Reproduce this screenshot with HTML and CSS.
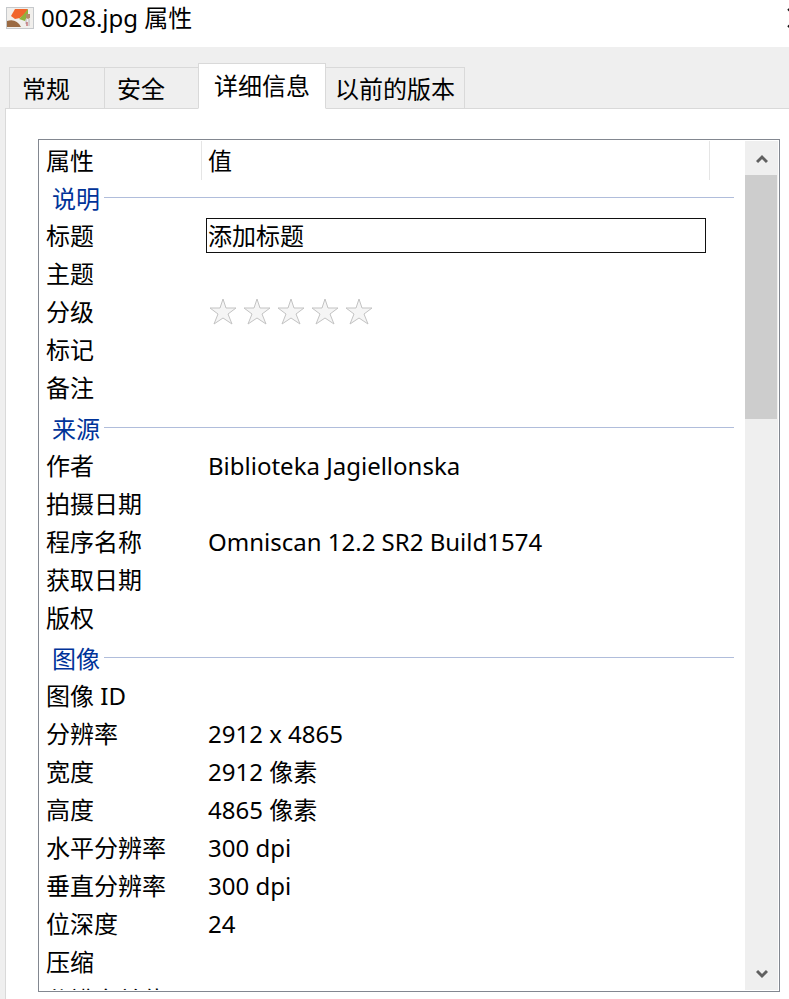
FILE: index.html
```html
<!DOCTYPE html>
<html lang="zh-CN">
<head>
    <meta charset="UTF-8">
    <meta name="viewport" content="width=device-width, initial-scale=1.0">
    <title>0028.jpg 属性</title>
    <link rel="stylesheet" href="styles.css">
</head>
<body>
    <header class="titlebar">
        <svg class="file-icon" viewBox="0 0 28 22" aria-hidden="true">
            <rect x="0.5" y="0.5" width="27" height="21" fill="#f1efec" stroke="#c6c9cc"/>
            <path d="M9 2h13l-3 5-5 4-5 1-4-3z" fill="#f1652b"/>
            <path d="M22 2v6l-3 6-6-2 5-5z" fill="#8fb23c"/>
            <path d="M1 14c6-2 11 0 14 6H1z" fill="#9a6a43"/>
            <path d="M20 7h4v4l-2 1-2-1z" fill="#b28a69"/>
            <path d="M20 12v5M23 12v7" stroke="#b9b4b8" fill="none"/>
            <path d="M21 15v4" stroke="#b23b42" fill="none"/>
        </svg>
        <h1 class="title">0028.jpg 属性</h1>
        <button class="close" type="button" aria-label="关闭">
            <svg viewBox="0 0 20 20" width="20" height="20"><path d="M1 1l18 18M19 1L1 19" stroke="#111" stroke-width="2" fill="none"/></svg>
        </button>
    </header>

    <main class="content">
        <div class="tabs" role="tablist">
            <button class="tab" type="button" role="tab">常规</button>
            <button class="tab" type="button" role="tab">安全</button>
            <button class="tab active" type="button" role="tab" aria-selected="true">详细信息</button>
            <button class="tab last" type="button" role="tab">以前的版本</button>
        </div>

        <section class="panel">
            <div class="list">
                <div class="view">
                    <table class="props">
                        <colgroup>
                            <col class="col-name">
                            <col>
                            <col class="col-end">
                        </colgroup>
                        <thead>
                            <tr><th>属性</th><th class="head-value">值</th><th class="head-value"></th></tr>
                        </thead>
                        <tbody>
                            <tr class="group"><th colspan="3"><span class="legend">说明</span></th></tr>
                            <tr>
                                <td><label for="titulo">标题</label></td>
                                <td class="edit"><input class="field" id="titulo" type="text" value="添加标题"></td>
                                <td></td>
                            </tr>
                            <tr><td>主题</td><td></td><td></td></tr>
                            <tr>
                                <td>分级</td>
                                <td>
                                    <div class="stars">
                                        <button class="star" type="button" aria-label="1 星"><svg viewBox="0 0 28 28"><path d="M14 1l3 9h10l-8 6 4 10-9-6-9 6 4-10-8-6h10z"/></svg></button>
                                        <button class="star" type="button" aria-label="2 星"><svg viewBox="0 0 28 28"><path d="M14 1l3 9h10l-8 6 4 10-9-6-9 6 4-10-8-6h10z"/></svg></button>
                                        <button class="star" type="button" aria-label="3 星"><svg viewBox="0 0 28 28"><path d="M14 1l3 9h10l-8 6 4 10-9-6-9 6 4-10-8-6h10z"/></svg></button>
                                        <button class="star" type="button" aria-label="4 星"><svg viewBox="0 0 28 28"><path d="M14 1l3 9h10l-8 6 4 10-9-6-9 6 4-10-8-6h10z"/></svg></button>
                                        <button class="star" type="button" aria-label="5 星"><svg viewBox="0 0 28 28"><path d="M14 1l3 9h10l-8 6 4 10-9-6-9 6 4-10-8-6h10z"/></svg></button>
                                    </div>
                                </td>
                                <td></td>
                            </tr>
                            <tr><td>标记</td><td></td><td></td></tr>
                            <tr><td>备注</td><td></td><td></td></tr>
                        </tbody>
                        <tbody>
                            <tr class="group next"><th colspan="3"><span class="legend">来源</span></th></tr>
                            <tr><td>作者</td><td>Biblioteka Jagiellonska</td><td></td></tr>
                            <tr><td>拍摄日期</td><td></td><td></td></tr>
                            <tr><td>程序名称</td><td>Omniscan 12.2 SR2 Build1574</td><td></td></tr>
                            <tr><td>获取日期</td><td></td><td></td></tr>
                            <tr><td>版权</td><td></td><td></td></tr>
                        </tbody>
                        <tbody>
                            <tr class="group next"><th colspan="3"><span class="legend">图像</span></th></tr>
                            <tr><td>图像 ID</td><td></td><td></td></tr>
                            <tr><td>分辨率</td><td>2912 x 4865</td><td></td></tr>
                            <tr><td>宽度</td><td>2912 像素</td><td></td></tr>
                            <tr><td>高度</td><td>4865 像素</td><td></td></tr>
                            <tr><td>水平分辨率</td><td>300 dpi</td><td></td></tr>
                            <tr><td>垂直分辨率</td><td>300 dpi</td><td></td></tr>
                            <tr><td>位深度</td><td>24</td><td></td></tr>
                            <tr><td>压缩</td><td></td><td></td></tr>
                            <tr><td>分辨率单位</td><td></td><td></td></tr>
                        </tbody>
                    </table>
                </div>
                <div class="scrollbar">
                    <button class="arrow" type="button" aria-label="向上滚动"><svg viewBox="0 0 12 10"><path d="M1 8l5-5 5 5"/></svg></button>
                    <div class="track"><div class="thumb"></div></div>
                    <button class="arrow" type="button" aria-label="向下滚动"><svg viewBox="0 0 12 10"><path d="M1 2l5 5 5-5"/></svg></button>
                </div>
            </div>
        </section>
    </main>
</body>
</html>
```

FILE: styles.css
```css
* {
    box-sizing: border-box;
}

body {
    font-family: "Noto Sans", "Noto Sans CJK SC", sans-serif;
    font-size: 24px;
    line-height: 36px;
    color: #000;
    background: #fff;
    margin: 0;
    height: 100vh;
    display: flex;
    flex-direction: column;
    overflow: hidden;
}

button,
input {
    font: inherit;
    color: inherit;
    margin: 0;
    padding: 0;
    border: none;
    background: none;
}

.titlebar {
    display: flex;
    height: 47px;
    padding: 0 0 12px 6px;
    align-items: center;
    flex-shrink: 0;
}

.file-icon {
    width: 28px;
    height: 22px;
    margin-right: 7px;
}

.title {
    flex: 1;
    margin: 0;
    font-size: 24px;
    font-weight: normal;
}

/* the window runs on past the right edge */
.close {
    display: flex;
    flex-shrink: 0;
    margin-right: -18px;
}

.content {
    flex: 1;
    min-height: 0;
    display: flex;
    flex-direction: column;
    background: #efefef;
    padding: 16px 0 0 5px;
}

.tabs {
    display: flex;
    align-items: flex-end;
    padding-left: 4px;
}

.tab {
    height: 42px;
    padding: 2px 34px 0 12px;
    border: 1px solid #d9d9d9;
    background: #efefef;
}

.tab + .tab {
    margin-left: -1px;
    padding-right: 33px;
}

.tab.active {
    height: 46px;
    padding: 0 15px;
    background: #fff;
    border-bottom-color: #fff;
    z-index: 1;
}

.tab.last {
    padding: 2px 9px 0;
}

.panel {
    flex: 1;
    min-height: 0;
    display: flex;
    margin-top: -1px;
    padding: 30px 9px 7px 32px;
    background: #fff;
    border: 1px solid #d9d9d9;
    border-width: 1px 0 0 1px;
}

.list {
    flex: 1;
    display: flex;
    padding: 1px;
    border: 1px solid #828790;
}

.view {
    flex: 1;
    overflow: hidden;
}

.props {
    width: 100%;
    table-layout: fixed;
    border-collapse: separate;
    border-spacing: 0;
}

.col-name {
    width: 161px;
}

.col-end {
    width: 36px;
}

.props th,
.props td {
    height: 38px;
    padding: 0 6px;
    font-weight: normal;
    text-align: left;
    white-space: nowrap;
}

.props td {
    padding-bottom: 2px;
}

.props thead th {
    height: 39px;
}

.props .head-value {
    border-left: 1px solid #e5e5e5;
}

.props td + td {
    padding-left: 7px;
}

.props .group th {
    padding: 0 11px 0 12px;
}

.props .next th {
    height: 40px;
    padding-top: 2px;
}

.legend {
    display: flex;
    align-items: center;
    color: #003399;
}

.legend::after {
    content: "";
    flex: 1;
    height: 1px;
    margin: 0 0 3px 4px;
    background: #b0bddb;
}

.props .edit {
    padding: 0 3px 0 5px;
    vertical-align: top;
}

.field {
    display: block;
    width: 100%;
    height: 35px;
    padding: 0 1px;
    border: 1px solid #111;
    background: #fff;
}

.stars {
    display: flex;
    gap: 6px;
    padding-left: 1px;
}

.star {
    width: 28px;
    height: 28px;
}

.star svg {
    display: block;
    fill: #f5f5f5;
    stroke: #c3c3c3;
    stroke-width: 1;
}

.scrollbar {
    width: 33px;
    display: flex;
    flex-direction: column;
    background: #efefef;
}

.arrow {
    height: 34px;
    display: flex;
    align-items: center;
    justify-content: center;
}

.arrow svg {
    width: 12px;
    height: 10px;
    margin-top: 2px;
    fill: none;
    stroke: #606060;
    stroke-width: 3;
}

.track {
    flex: 1;
    padding-right: 1px;
}

.thumb {
    height: 31.2%;
    background: #cdcdcd;
}
```
